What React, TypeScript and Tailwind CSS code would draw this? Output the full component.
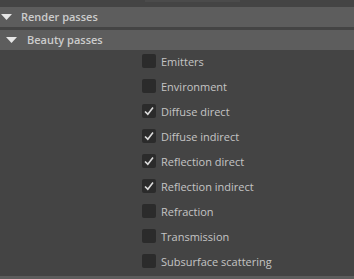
const passes = [
  { label: "Emitters", checked: false },
  { label: "Environment", checked: false },
  { label: "Diffuse direct", checked: true },
  { label: "Diffuse indirect", checked: true },
  { label: "Reflection direct", checked: true },
  { label: "Reflection indirect", checked: true },
  { label: "Refraction", checked: false },
  { label: "Transmission", checked: false },
  { label: "Subsurface scattering", checked: false },
];

const Caret = () => (
  <svg width="11" height="6" viewBox="0 0 11 6" className="shrink-0">
    <path d="M0 0 H11 L5.5 6 Z" fill="#e6e6e6" />
  </svg>
);

const Check = () => (
  <svg width="14" height="14" viewBox="0 0 14 14">
    <path d="M3 7.5 L5.8 10.2 L11 3.5" fill="none" stroke="#dcdcdc" strokeWidth="1.6" />
  </svg>
);

const App = () => {
  return (
    <div
      className="w-[354px] h-[279px] bg-[#444444] overflow-hidden flex flex-col text-[#c4c4c4]"
      style={{ fontFamily: '"Open Sans", "Liberation Sans", sans-serif' }}
    >
      {/* top strip */}
      <div className="h-[7px] shrink-0">
        <div className="ml-[145px] w-[95px] h-[2px] bg-[#4b4b4b]" />
      </div>

      <div className="h-[20px] shrink-0 bg-[#5d5d5d] flex items-center pl-[1px] gap-[9px]">
        <Caret />
        <span className="text-[11px] font-semibold text-[#cccccc]">Render passes</span>
      </div>

      <div className="h-[3px] shrink-0" />

      <div className="h-[20px] shrink-0 bg-[#5d5d5d] flex items-center pl-[6px] gap-[10px]">
        <Caret />
        <span className="text-[11px] font-semibold text-[#cccccc]">Beauty passes</span>
      </div>

      <div className="flex flex-col gap-[3px] pl-[142px]">
        {passes.map((p) => (
          <div key={p.label} className="h-[22px] flex items-center gap-[5px]">
            <div className="w-[14px] h-[14px] rounded-[2px] bg-[#2b2b2b] flex items-center justify-center">
              {p.checked && <Check />}
            </div>
            <span className="text-[11px] leading-none">{p.label}</span>
          </div>
        ))}
      </div>

      <div className="flex-1" />
      <div className="h-[3px] shrink-0 bg-[#5d5d5d]" />
    </div>
  );
};

export default App;
